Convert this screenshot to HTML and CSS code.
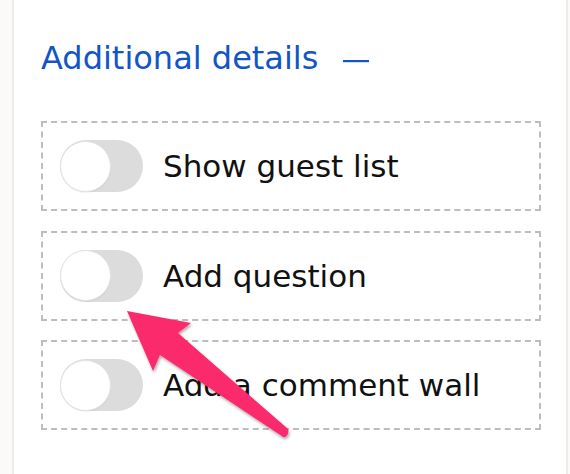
FILE: index.html
```html
<!DOCTYPE html>
<html lang="en">
<head>
<meta charset="utf-8">
<title>Additional details</title>
<link rel="stylesheet" href="styles.css">
</head>
<body>
<div class="panel">
  <h2 class="heading">
    <span>Additional details</span>
    <svg class="collapse" width="26" height="4" viewBox="0 0 26 4"><rect x="0" y="1" width="26" height="2.2" fill="#1256c6"/></svg>
  </h2>
  <div class="options">
    <div class="option">
      <span class="toggle"><span class="knob"></span></span>
      <span class="label">Show guest list</span>
    </div>
    <div class="option">
      <span class="toggle"><span class="knob"></span></span>
      <span class="label">Add question</span>
    </div>
    <div class="option">
      <span class="toggle"><span class="knob"></span></span>
      <span class="label">Add a comment wall</span>
    </div>
  </div>
</div>
<svg class="arrow" width="570" height="474" viewBox="0 0 570 474">
  <defs>
    <filter id="sh" x="-20%" y="-20%" width="140%" height="140%">
      <feDropShadow dx="1" dy="2" stdDeviation="1.6" flood-color="#000" flood-opacity="0.35"/>
    </filter>
  </defs>
  <path filter="url(#sh)" fill="#fb2b6c" d="M127 311 L191 323 L178 333 L287.5 428.5 Q290 433 286 436.5 Q283 438 281 435.5 L160 355 L153 371 Z"/>
</svg>
</body>
</html>
```
FILE: styles.css
```css
html, body {
  margin: 0;
  padding: 0;
}
body {
  background: #fbfaf9;
  width: 570px;
  height: 474px;
  overflow: hidden;
  position: relative;
  font-family: "DejaVu Sans", "Liberation Sans", sans-serif;
}
.panel {
  margin-left: 12px;
  width: 556px;
  height: 474px;
  background: #ffffff;
  border-left: 2px solid #ececec;
  border-right: 2px solid #eeeceb;
  padding: 38px 25px 0 27px;
  box-sizing: border-box;
}
.heading {
  margin: 0;
  display: flex;
  align-items: center;
  gap: 25px;
  font-size: 32px;
  line-height: 40px;
  font-weight: normal;
  color: #1256c6;
}
.collapse {
  display: block;
  margin-top: 6px;
}
.options {
  margin-top: 43px;
  display: flex;
  flex-direction: column;
  gap: 19.5px;
}
.option {
  display: flex;
  align-items: center;
  gap: 20px;
  height: 52px;
  padding: 17px;
  border: 2px dashed #bdbdbd;
}
.toggle {
  display: flex;
  align-items: center;
  width: 83px;
  height: 52px;
  border-radius: 26px;
  background: #dcdcdc;
  flex: none;
}
.knob {
  width: 49px;
  height: 49px;
  border-radius: 50%;
  background: #ffffff;
  border: 1.5px solid #e3e3e3;
  box-shadow: 0 1px 1px rgba(0,0,0,0.05);
}
.label {
  font-size: 31px;
  color: #111111;
  line-height: 40px;
}
.arrow {
  position: absolute;
  left: 0;
  top: 0;
  pointer-events: none;
}
```
